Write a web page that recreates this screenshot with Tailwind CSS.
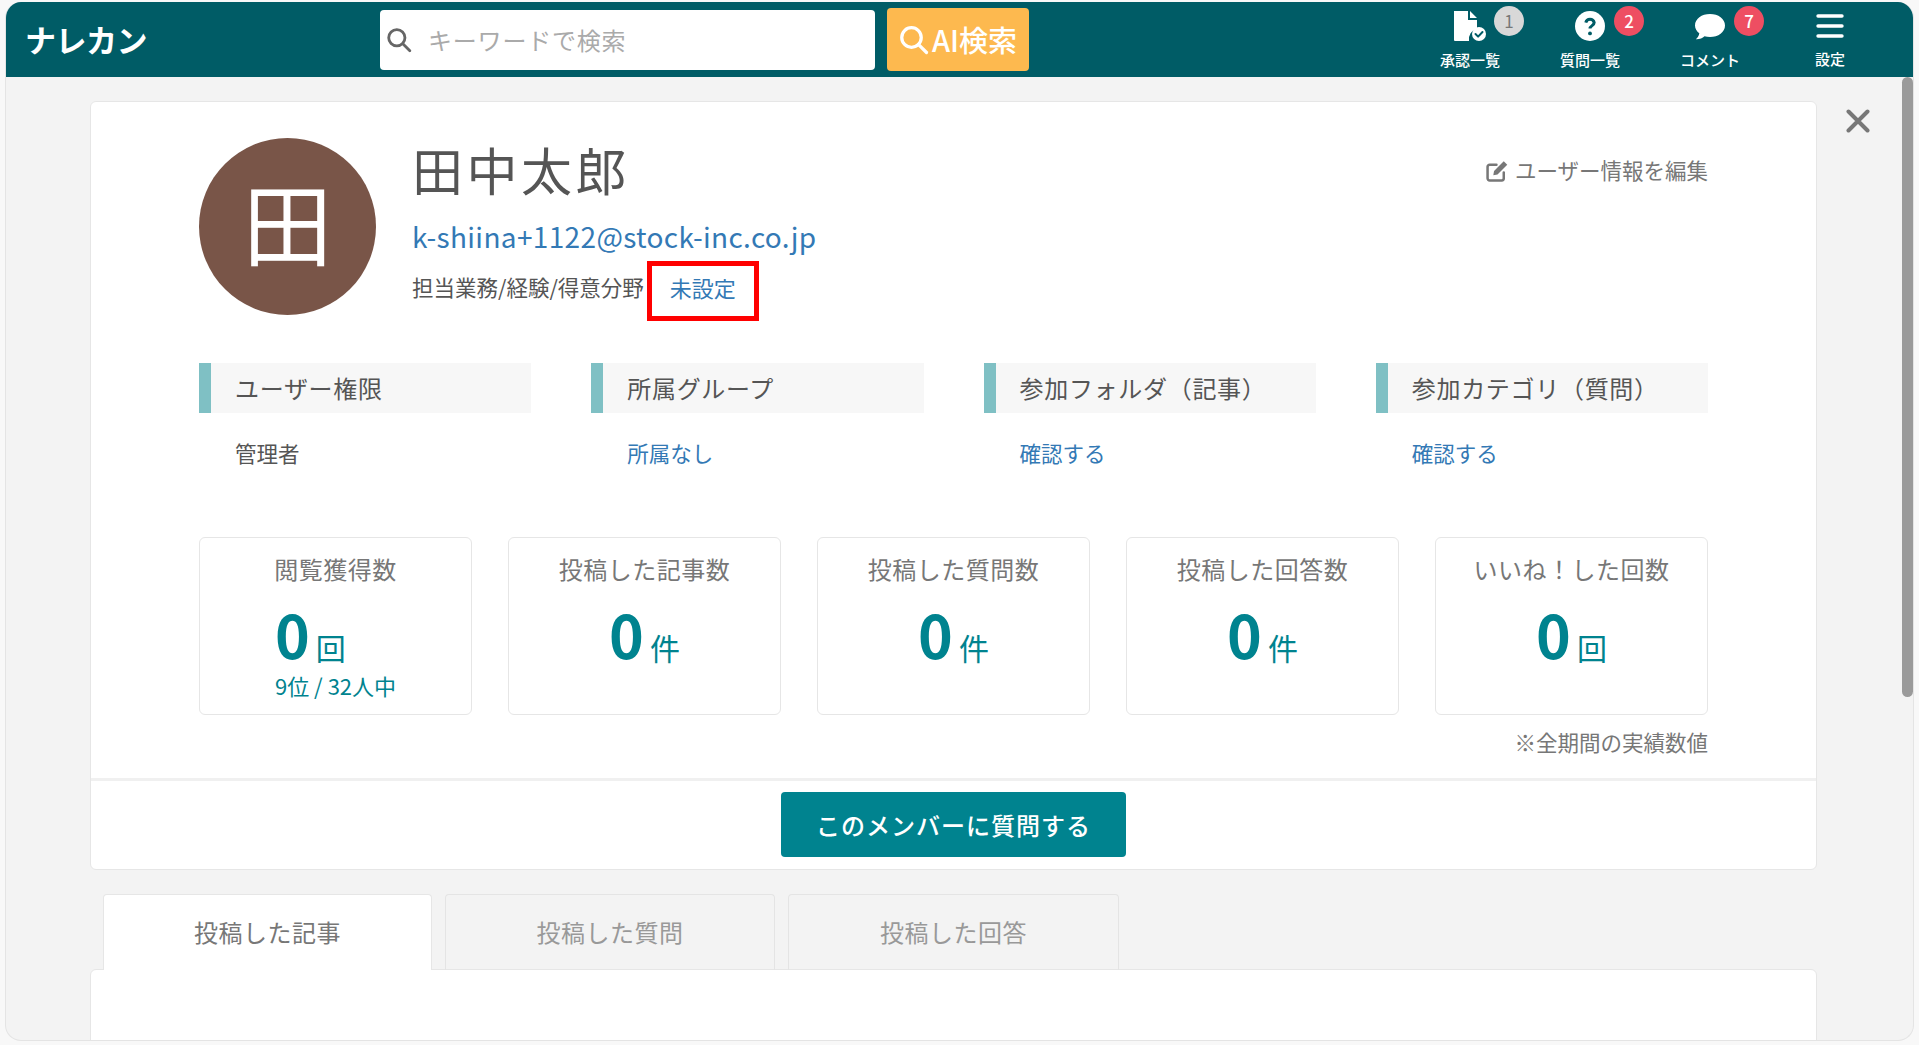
<!DOCTYPE html>
<html lang="ja">
<head>
  <meta charset="UTF-8" />
  <title>ナレカン - ユーザー</title>
  <script src="https://cdn.jsdelivr.net/npm/@tailwindcss/browser@4"></script>
</head>
<body class="bg-[#f8f8f8] h-[1045px] overflow-hidden pt-[2px] pl-[5px] pr-[5px] font-['Noto_Sans_CJK_JP','Noto_Sans',sans-serif] text-[#555]">
  <div class="w-[1909px] h-[1039px] bg-[#f3f3f3] rounded-[16px] border-b border-x border-[#e4e4e4] overflow-hidden relative">

    <!-- Header -->
    <header class="h-[75px] bg-[#005c66] flex items-center text-white">
      <div class="w-[374px] pl-[19px] text-[31px] font-bold leading-none tracking-[-0.5px] mt-[-2px]">ナレカン</div>
      <div class="w-[495px] h-[60px] bg-white rounded-[4px] flex items-center pl-[6px]">
        <svg class="w-[26px] h-[26px] text-[#666]" viewBox="0 0 24 24" fill="none" stroke="currentColor" stroke-width="2.6" stroke-linecap="round"><circle cx="10" cy="10" r="7.5"/><path d="M15.5 15.5 22 22"/></svg>
        <span class="ml-[16px] text-[24px] tracking-[0.8px] text-[#aaa]">キーワードで検索</span>
      </div>
      <button class="ml-[12px] w-[142px] h-[63px] bg-[#fdb94f] rounded-[4px] flex items-center justify-center gap-[3px] text-[29px] font-medium">
        <svg class="w-[30px] h-[30px]" viewBox="0 0 24 24" fill="none" stroke="currentColor" stroke-width="2.6" stroke-linecap="round"><circle cx="10" cy="10" r="7.8"/><path d="M15.5 15.5 22 22"/></svg>
        AI検索
      </button>

      <nav class="ml-auto mr-[23px] flex h-full">
        <div class="w-[120px] flex flex-col items-center relative">
          <svg class="w-[34px] h-[30px] mt-[9px]" viewBox="0 0 34 30">
            <path fill="#fff" d="M1 0h14v9h9v8.500a11 11 0 0 0-8 12.500H2a1 1 0 0 1-1-1zM17 0l7 7h-7z"/>
            <circle cx="26" cy="23" r="7" fill="#fff"/>
            <path d="M22.500 23l2.600 2.600 4.400-4.600" fill="none" stroke="#005c66" stroke-width="2" stroke-linecap="round" stroke-linejoin="round"/>
          </svg>
          <span class="mt-[9px] text-[15px] font-medium leading-[20px]">承認一覧</span>
          <span class="absolute left-[84px] top-[4px] w-[30px] h-[30px] rounded-full bg-[#d8d8d8] text-[#777] text-[17px] flex items-center justify-center">1</span>
        </div>
        <div class="w-[120px] flex flex-col items-center relative">
          <svg class="w-[30px] h-[30px] mt-[9px]" viewBox="0 0 30 30">
            <circle cx="15" cy="15" r="15" fill="#fff"/>
            <path d="M10.800 11.600a4.300 4.300 0 0 1 8.400 0c0 3-4.200 3-4.200 6" fill="none" stroke="#005c66" stroke-width="3" />
            <circle cx="15" cy="22.400" r="1.900" fill="#005c66"/>
          </svg>
          <span class="mt-[9px] text-[15px] font-medium leading-[20px]">質問一覧</span>
          <span class="absolute left-[84px] top-[4px] w-[30px] h-[30px] rounded-full bg-[#ee4e62] text-white text-[17px] font-medium flex items-center justify-center">2</span>
        </div>
        <div class="w-[120px] flex flex-col items-center relative">
          <svg class="w-[30px] h-[27px] mt-[11px] mb-[1px]" viewBox="0 0 30 27">
            <path fill="#fff" d="M15 1c8.300 0 15 4.800 15 11.500S23.300 24 15 24c-2 0-3.800-.3-5.500-.8C7.500 25 4.500 26.500.8 26.300c1.900-1.700 3.200-3.800 3.500-6C1.700 18.300 0 15.600 0 12.500 0 5.800 6.700 1 15 1z"/>
          </svg>
          <span class="mt-[9px] text-[15px] font-medium leading-[20px]">コメント</span>
          <span class="absolute left-[84px] top-[4px] w-[30px] h-[30px] rounded-full bg-[#ee4e62] text-white text-[17px] font-medium flex items-center justify-center">7</span>
        </div>
        <div class="w-[120px] flex flex-col items-center">
          <svg class="w-[28px] h-[26px] mt-[11px] mb-[1px]" viewBox="0 0 28 26" fill="none" stroke="#fff" stroke-width="3.4" stroke-linecap="round"><path d="M2 3h24M2 13h24M2 23h24"/></svg>
          <span class="mt-[9px] text-[15px] font-medium leading-[20px]">設定</span>
        </div>
      </nav>
    </header>

    <!-- Scrollbar and close -->
    <div class="absolute left-[1896px] top-[75px] w-[11px] h-[620px] rounded-full bg-[#9a9a9a]"></div>
    <svg class="absolute left-[1840px] top-[107px] w-[24px] h-[24px]" viewBox="0 0 24 24" fill="none" stroke="#777" stroke-width="4" stroke-linecap="round"><path d="M2.500 2.500l19 19M21.500 2.500l-19 19"/></svg>

    <main class="pl-[84px] pt-[24px]">
      <!-- Profile card -->
      <section class="w-[1727px] h-[769px] bg-white rounded-[6px] border border-[#e6e6e6] flex flex-col">
        <div class="px-[108px] pt-[36px] flex-1">
          <div class="h-[225px] flex">
            <div class="w-[177px] h-[177px] rounded-full bg-[#795548] text-white text-[90px] leading-none pb-[13px] flex items-center justify-center shrink-0">田</div>
            <div class="ml-[36px] flex-1 relative">
              <h1 class="text-[51px] leading-[60px] mt-[1px] tracking-[3.5px] font-normal text-[#555]">田中太郎</h1>
              <p class="mt-[17px] text-[28px] leading-[40px] tracking-[0.35px] text-[#3379b5]">k-shiina+1122@stock-inc.co.jp</p>
              <div class="flex items-center mt-[16px]">
                <span class="text-[21.500px] leading-[30px]">担当業務/経験/得意分野</span>
                <span class="w-[112px] h-[60px] border-[5px] border-[#f00] flex items-center justify-center pb-[7px] text-[22px] text-[#3379b5] ml-[3px] mt-[-11px] mb-[-19px]">未設定</span>
              </div>
              <a class="absolute right-0 top-[16px] flex items-center gap-[6px] text-[21.500px] leading-[32px] text-[#777]">
                <svg class="w-[23px] h-[23px]" viewBox="0 0 22 22" fill="none" stroke="#777" stroke-width="2.400" stroke-linecap="round"><path d="M17 13v5.500A2 2 0 0 1 15 20.500H3.500a2 2 0 0 1-2-2V7.500a2 2 0 0 1 2-2H10"/><path fill="#777" stroke="none" d="M7 15.500l.7-4L17 2.200l3.300 3.300-9.300 9.300z"/></svg>
                ユーザー情報を編集
              </a>
            </div>
          </div>

          <!-- Attribute columns -->
          <div class="grid grid-cols-4 gap-x-[60px]">
            <div>
              <h2 class="h-[50px] bg-[#f7f7f7] border-l-[12px] border-[#7fc0c4] pl-[24px] flex items-center text-[24px] tracking-[0.7px] font-normal text-[#555]">ユーザー権限</h2>
              <p class="mt-[24px] pl-[36px] text-[21.500px] leading-[32px]">管理者</p>
            </div>
            <div>
              <h2 class="h-[50px] bg-[#f7f7f7] border-l-[12px] border-[#7fc0c4] pl-[24px] flex items-center text-[24px] tracking-[0.7px] font-normal text-[#555]">所属グループ</h2>
              <p class="mt-[24px] pl-[36px] text-[21.500px] leading-[32px] text-[#3379b5]">所属なし</p>
            </div>
            <div>
              <h2 class="h-[50px] bg-[#f7f7f7] border-l-[12px] border-[#7fc0c4] pl-[24px] flex items-center text-[24px] tracking-[0.7px] font-normal text-[#555]">参加フォルダ（記事）</h2>
              <p class="mt-[24px] pl-[36px] text-[21.500px] leading-[32px] text-[#3379b5]">確認する</p>
            </div>
            <div>
              <h2 class="h-[50px] bg-[#f7f7f7] border-l-[12px] border-[#7fc0c4] pl-[24px] flex items-center text-[24px] tracking-[0.7px] font-normal text-[#555]">参加カテゴリ（質問）</h2>
              <p class="mt-[24px] pl-[36px] text-[21.500px] leading-[32px] text-[#3379b5]">確認する</p>
            </div>
          </div>

          <!-- Stats -->
          <div class="mt-[68px] grid grid-cols-5 gap-x-[36px]">
            <div class="h-[178px] border border-[#e6e6e6] rounded-[6px] flex flex-col items-center pt-[15px]">
              <span class="text-[24px] leading-[32px] tracking-[0.5px] text-[#777]">閲覧獲得数</span>
              <div class="flex flex-col items-start">
                <div class="mt-[14px] h-[70px] flex items-end text-[#00838f]"><span class="text-[59px] font-bold leading-[70px]">0</span><span class="ml-[6px] mb-[4px] text-[30px] leading-[36px]">回</span></div>
                <span class="mt-[2px] text-[22px] leading-[28px] text-[#00838f]">9位 / 32人中</span>
              </div>
            </div>
            <div class="h-[178px] border border-[#e6e6e6] rounded-[6px] flex flex-col items-center pt-[15px]">
              <span class="text-[24px] leading-[32px] tracking-[0.5px] text-[#777]">投稿した記事数</span>
              <div class="mt-[14px] h-[70px] flex items-end text-[#00838f]"><span class="text-[59px] font-bold leading-[70px]">0</span><span class="ml-[6px] mb-[4px] text-[30px] leading-[36px]">件</span></div>
            </div>
            <div class="h-[178px] border border-[#e6e6e6] rounded-[6px] flex flex-col items-center pt-[15px]">
              <span class="text-[24px] leading-[32px] tracking-[0.5px] text-[#777]">投稿した質問数</span>
              <div class="mt-[14px] h-[70px] flex items-end text-[#00838f]"><span class="text-[59px] font-bold leading-[70px]">0</span><span class="ml-[6px] mb-[4px] text-[30px] leading-[36px]">件</span></div>
            </div>
            <div class="h-[178px] border border-[#e6e6e6] rounded-[6px] flex flex-col items-center pt-[15px]">
              <span class="text-[24px] leading-[32px] tracking-[0.5px] text-[#777]">投稿した回答数</span>
              <div class="mt-[14px] h-[70px] flex items-end text-[#00838f]"><span class="text-[59px] font-bold leading-[70px]">0</span><span class="ml-[6px] mb-[4px] text-[30px] leading-[36px]">件</span></div>
            </div>
            <div class="h-[178px] border border-[#e6e6e6] rounded-[6px] flex flex-col items-center pt-[15px]">
              <span class="text-[24px] leading-[32px] tracking-[0.5px] text-[#777]">いいね！した回数</span>
              <div class="mt-[14px] h-[70px] flex items-end text-[#00838f]"><span class="text-[59px] font-bold leading-[70px]">0</span><span class="ml-[6px] mb-[4px] text-[30px] leading-[36px]">回</span></div>
            </div>
          </div>
          <p class="mt-[11px] text-right text-[21.500px] leading-[32px] text-[#777]">※全期間の実績数値</p>
        </div>

        <div class="h-[91px] border-t-[3px] border-[#f0f0f0] flex items-start justify-center pt-[11px]">
          <button class="w-[345px] h-[65px] bg-[#00838f] rounded-[4px] text-white text-[24px] tracking-[1px] font-medium">このメンバーに質問する</button>
        </div>
      </section>

      <!-- Tabs -->
      <div class="mt-[24px] ml-[13px] flex gap-[13px] h-[76px] items-stretch">
        <div class="w-[329px] bg-white border border-b-0 border-[#e6e6e6] rounded-t-[4px] flex items-center justify-center pb-[2px] text-[24px] tracking-[0.5px] text-[#777]">投稿した記事</div>
        <div class="w-[330px] border border-b-0 border-[#e4e4e4] rounded-t-[4px] flex items-center justify-center pb-[2px] text-[24px] tracking-[0.5px] text-[#999]">投稿した質問</div>
        <div class="w-[331px] border border-b-0 border-[#e4e4e4] rounded-t-[4px] flex items-center justify-center pb-[2px] text-[24px] tracking-[0.5px] text-[#999]">投稿した回答</div>
      </div>
      <section class="w-[1727px] h-[90px] bg-white rounded-t-[6px] border border-[#e6e6e6] mt-[-1px]"></section>
    </main>
  </div>
</body>
</html>
